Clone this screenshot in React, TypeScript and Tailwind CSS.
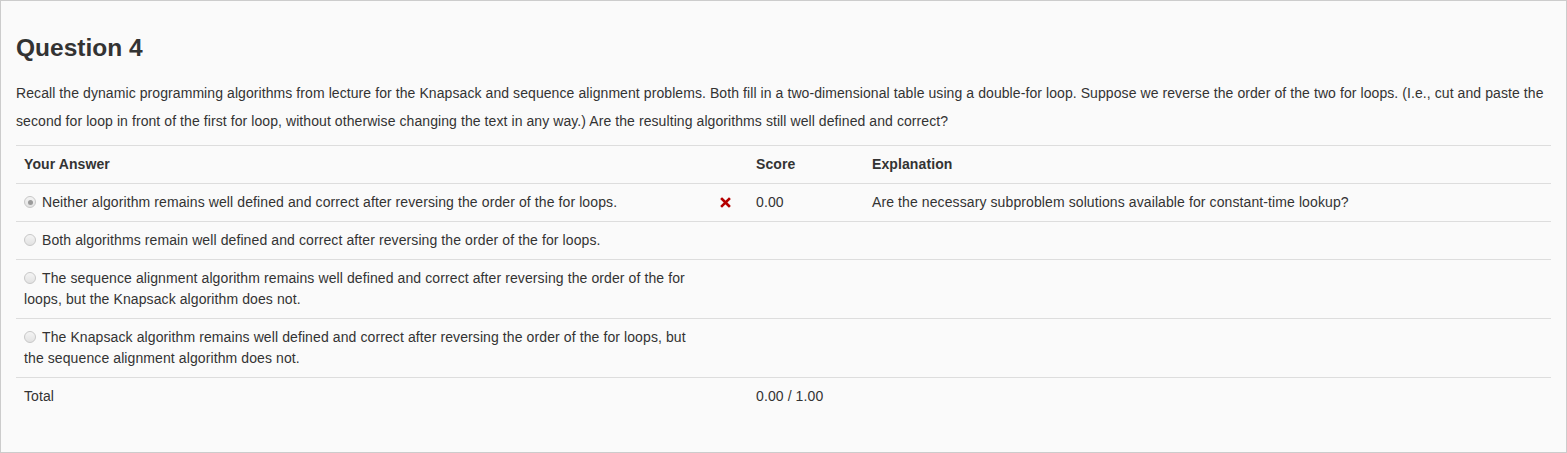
import React from "react";

function Radio({ checked }: { checked?: boolean }) {
  return (
    <span className="relative inline-block align-[-1px] w-[12px] h-[12px] rounded-full border border-[#c8c8c8] bg-gradient-to-b from-[#f4f4f4] to-[#e2e2e2] mr-[6px]">
      {checked && (
        <span className="absolute left-1/2 top-1/2 w-[5px] h-[5px] -ml-[2.5px] -mt-[2.5px] rounded-full bg-[#9a9a9a]" />
      )}
    </span>
  );
}

function XIcon() {
  return (
    <svg width="11" height="11" viewBox="0 0 11 11" className="inline-block align-[-1px]">
      <path d="M2 2 L9 9 M9 2 L2 9" stroke="#b50000" strokeWidth="2.6" strokeLinecap="square" />
    </svg>
  );
}

const answers = [
  "Neither algorithm remains well defined and correct after reversing the order of the for loops.",
  "Both algorithms remain well defined and correct after reversing the order of the for loops.",
  "The sequence alignment algorithm remains well defined and correct after reversing the order of the for loops, but the Knapsack algorithm does not.",
  "The Knapsack algorithm remains well defined and correct after reversing the order of the for loops, but the sequence alignment algorithm does not.",
];

export default function App() {
  return (
    <div
      className="w-[1567px] h-[453px] box-border border border-[#cccccc] bg-[#fafafa] px-[15px] pt-[34px] text-[#333333] text-[14px]"
      style={{ fontFamily: '"Liberation Sans", Arial, sans-serif' }}
    >
      <h3 className="text-[24.5px] leading-[26px] font-bold m-0">Question 4</h3>
      <p className="mt-[18px] mb-[10px] leading-[28px] tracking-[0.08px]">
        Recall the dynamic programming algorithms from lecture for the Knapsack and sequence alignment problems. Both fill in a two-dimensional table using a double-for loop. Suppose we reverse the order of the two for loops. (I.e., cut and paste the second for loop in front of the first for loop, without otherwise changing the text in any way.) Are the resulting algorithms still well defined and correct?
      </p>
      <table className="w-full table-fixed border-collapse leading-[21px] tracking-[0.1px]">
        <colgroup>
          <col className="w-[692px]" />
          <col className="w-[40px]" />
          <col className="w-[116px]" />
          <col />
        </colgroup>
        <thead>
          <tr className="border-t border-[#dddddd]">
            <th className="text-left font-bold p-[8px]">Your Answer</th>
            <th className="p-[8px]"></th>
            <th className="text-left font-bold p-[8px]">Score</th>
            <th className="text-left font-bold p-[8px]">Explanation</th>
          </tr>
        </thead>
        <tbody>
          {answers.map((a, i) => (
            <tr key={i} className="border-t border-[#dddddd]">
              <td className="p-[8px] align-top">
                <Radio checked={i === 0} />
                {a}
              </td>
              <td className="py-[8px] pl-[12px] pr-[4px] align-top">{i === 0 && <XIcon />}</td>
              <td className="p-[8px] align-top">{i === 0 ? "0.00" : ""}</td>
              <td className="p-[8px] align-top">
                {i === 0 ? "Are the necessary subproblem solutions available for constant-time lookup?" : ""}
              </td>
            </tr>
          ))}
          <tr className="border-t border-[#dddddd]">
            <td className="p-[8px]">Total</td>
            <td className="p-[8px]"></td>
            <td className="p-[8px]">0.00 / 1.00</td>
            <td className="p-[8px]"></td>
          </tr>
        </tbody>
      </table>
    </div>
  );
}
